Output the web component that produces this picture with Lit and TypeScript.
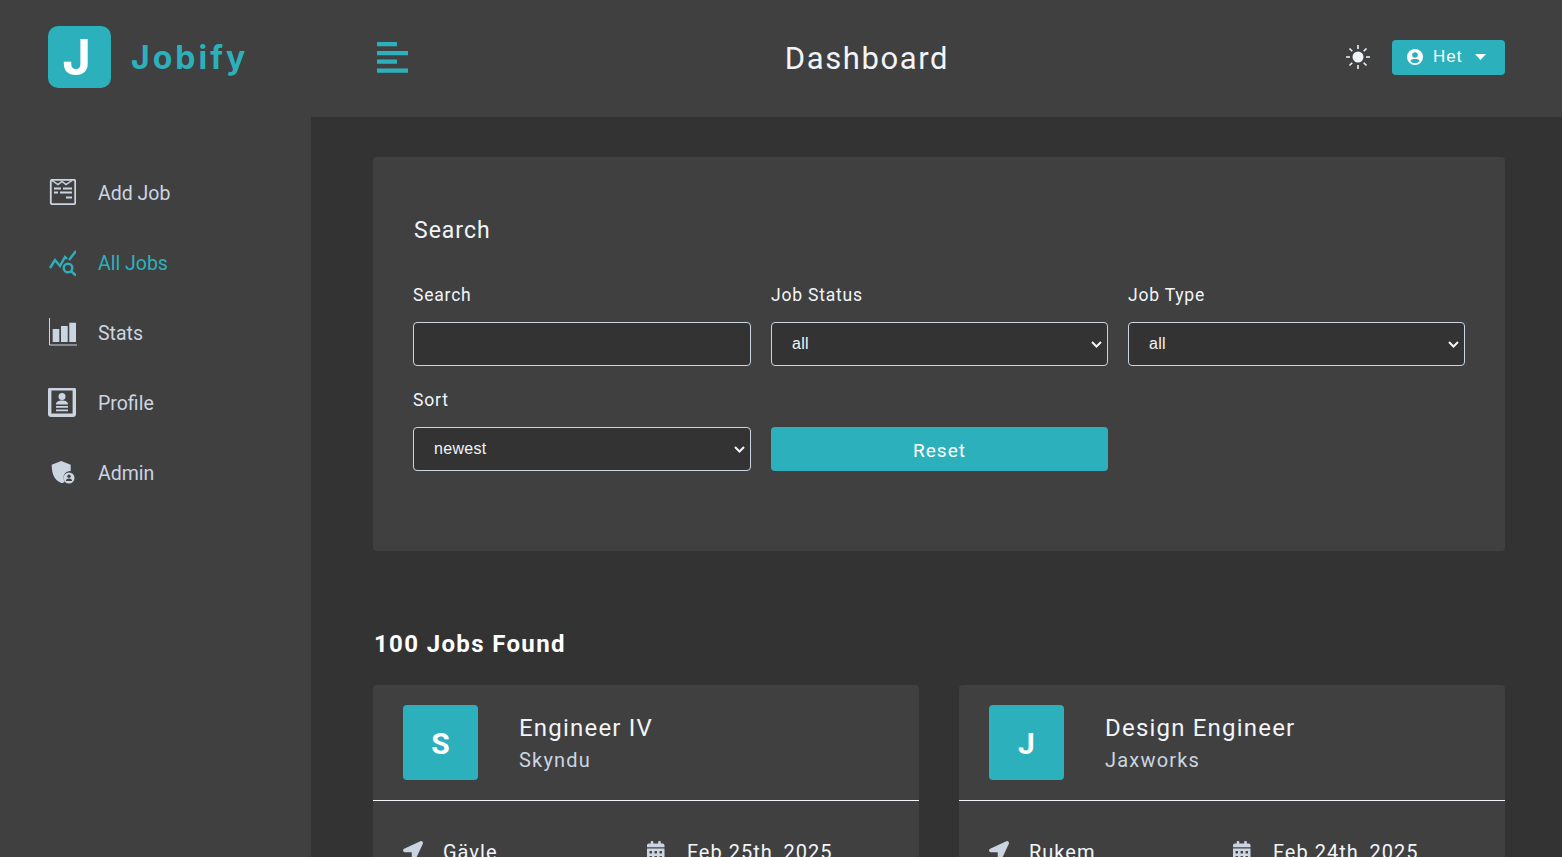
import { LitElement, html, css } from 'lit';
import { customElement } from 'lit/decorators.js';

const icons = {
    addJob: html`<svg viewBox="0 0 28 28"><rect x="2.800" y=".8" width="24.400" height="24.400" rx="1.500" fill="none" stroke="currentColor" stroke-width="1.800"/><path fill="none" stroke="currentColor" stroke-width="1.500" d="M4 1.500l6 4 4-3 4 3 6-4"/><path fill="currentColor" d="M6 8.500h7v2H6zM15 8.500h9v2h-9zM6 12.500h4v2H6zM12 12.500h12v2H12zM18 17.500h6v2h-6z"/></svg>`,
    allJobs: html`<svg viewBox="0 0 28 28"><path fill="none" stroke="currentColor" stroke-width="2.400" d="M2 19l5-8 5 6 5-9 2 2M21 11l7-9"/><circle cx="20" cy="19" r="4.300" fill="none" stroke="currentColor" stroke-width="2.400"/><path stroke="currentColor" stroke-width="2.400" d="M23.500 22.500l4.500 4"/></svg>`,
    stats: html`<svg viewBox="0 0 28 28" class="overflow"><path fill="none" stroke="currentColor" stroke-width="1" d="M1.500-1v27H29"/><path fill="currentColor" d="M4.700 10h6.600v13H4.700zM13 7h6.700v16H13zM21.300 3.700H28V23h-6.700z"/></svg>`,
    profile: html`<svg viewBox="0 1 28 30"><rect x="1.700" y="1.700" width="24.600" height="26.600" rx="1.500" fill="none" stroke="currentColor" stroke-width="3.400"/><circle cx="14" cy="9.500" r="3.500" fill="currentColor"/><path fill="currentColor" d="M8 17.500c0-3 2.500-4 6-4s6 1 6 4zM8 19h12v1.700H8zM8 22.500h12v1.700H8z"/></svg>`,
    admin: html`<svg viewBox="0 0 28 28"><path fill="currentColor" d="M13.200 2l9.500 3.800V12c-6 0-9 5-6 11-1 .7-2.500 1-3.500 1C7 21.500 3.700 16 3.700 5.800z"/><circle cx="21" cy="19" r="5.500" fill="currentColor"/><circle cx="21" cy="17.300" r="1.700" fill="#404040"/><path fill="#404040" d="M17.900 22c.3-1.800 1.400-2.500 3.100-2.500s2.800.7 3.100 2.500z"/></svg>`,
    toggle: html`<svg viewBox="0 0 31 31"><path fill="currentColor" d="M0 0h20v4.300H0zM0 9h31v4.300H0zM0 17.500h20v4.300H0zM0 26.500h31v4.300H0z"/></svg>`,
    sun: html`<svg viewBox="0 0 24 24"><circle cx="12" cy="12" r="5.500" fill="currentColor"/><path stroke="currentColor" stroke-width="1.600" d="M12 0v4M12 20v4M0 12h4M20 12h4M3.500 3.500l2.800 2.800M17.700 17.700l2.800 2.800M3.500 20.500l2.800-2.800M17.700 6.300l2.800-2.800"/></svg>`,
    user: html`<svg viewBox="0 0 16 16"><path fill="currentColor" fill-rule="evenodd" d="M8 0a8 8 0 1 0 0 16A8 8 0 0 0 8 0zm0 3.200a2.800 2.800 0 1 1 0 5.600 2.800 2.800 0 0 1 0-5.600zm0 11a6.200 6.200 0 0 1-4.700-2.200C3.900 10.800 5 10 6.200 10h3.600c1.200 0 2.300.8 2.900 2A6.200 6.200 0 0 1 8 14.200z"/></svg>`,
    caret: html`<svg viewBox="0 0 11 6"><path fill="currentColor" d="M0 0h11L5.500 6z"/></svg>`,
    arrow: html`<svg viewBox="0 0 512 512"><path fill="currentColor" d="M444.520 3.520L28.740 195.420c-47.970 22.390-31.980 92.750 19.190 92.750h175.910v175.910c0 51.170 70.360 67.170 92.750 19.190l191.900-415.780c15.990-38.390-25.590-79.970-63.970-63.970z"/></svg>`,
    calendar: html`<svg viewBox="0 0 448 512"><path fill="currentColor" d="M0 464c0 26.500 21.500 48 48 48h352c26.500 0 48-21.500 48-48V192H0v272zm320-196c0-6.600 5.400-12 12-12h40c6.600 0 12 5.400 12 12v40c0 6.600-5.400 12-12 12h-40c-6.600 0-12-5.400-12-12v-40zm0 128c0-6.600 5.400-12 12-12h40c6.600 0 12 5.400 12 12v40c0 6.600-5.400 12-12 12h-40c-6.600 0-12-5.400-12-12v-40zM192 268c0-6.600 5.400-12 12-12h40c6.600 0 12 5.400 12 12v40c0 6.600-5.400 12-12 12h-40c-6.600 0-12-5.400-12-12v-40zm0 128c0-6.600 5.400-12 12-12h40c6.600 0 12 5.400 12 12v40c0 6.600-5.400 12-12 12h-40c-6.600 0-12-5.400-12-12v-40zM64 268c0-6.600 5.400-12 12-12h40c6.600 0 12 5.400 12 12v40c0 6.600-5.400 12-12 12H76c-6.600 0-12-5.400-12-12v-40zm0 128c0-6.600 5.400-12 12-12h40c6.600 0 12 5.400 12 12v40c0 6.600-5.400 12-12 12H76c-6.600 0-12-5.400-12-12v-40zM400 64h-48V16c0-8.800-7.200-16-16-16h-32c-8.800 0-16 7.200-16 16v48H160V16c0-8.800-7.200-16-16-16h-32c-8.800 0-16 7.200-16 16v48H48C21.500 64 0 85.500 0 112v48h448v-48c0-26.500-21.500-48-48-48z"/></svg>`,
};

const navItems = [
    { label: 'Add Job', icon: icons.addJob, active: false },
    { label: 'All Jobs', icon: icons.allJobs, active: true },
    { label: 'Stats', icon: icons.stats, active: false },
    { label: 'Profile', icon: icons.profile, active: false },
    { label: 'Admin', icon: icons.admin, active: false },
];

const jobs = [
    { letter: 'S', title: 'Engineer IV', company: 'Skyndu', location: 'Gävle', date: 'Feb 25th, 2025' },
    { letter: 'J', title: 'Design Engineer', company: 'Jaxworks', location: 'Rukem', date: 'Feb 24th, 2025' },
];

@customElement('app-root')
export class AppRoot extends LitElement {
    static styles = css`
        :host {
            display: flex;
            height: 100vh;
            overflow: hidden;
            background: #333333;
            color: #f1f5f9;
            font-family: Roboto, 'Open Sans', sans-serif;
            letter-spacing: 1px;
        }

        svg {
            display: block;
        }

        svg.overflow {
            overflow: visible;
        }

        .sidebar {
            flex: 0 0 311px;
            background: #404040;
        }

        .logo {
            display: flex;
            align-items: center;
            gap: 20px;
            height: 117px;
            padding: 0 0 3px 48px;
            box-sizing: border-box;
        }

        .logo-mark {
            width: 63px;
            height: 62px;
            box-sizing: border-box;
            padding-right: 6px;
            border-radius: 10px;
            background: #2cb1bc;
            color: #fff;
            display: flex;
            align-items: center;
            justify-content: center;
            font: 700 49px/1 Inter, sans-serif;
            letter-spacing: 0;
        }

        .logo-text {
            margin-top: 2px;
            color: #2cb1bc;
            font: 700 32px/1 Inter, sans-serif;
            letter-spacing: 3px;
        }

        nav {
            display: flex;
            flex-direction: column;
            padding-top: 41px;
        }

        .nav-item {
            display: flex;
            align-items: center;
            height: 70px;
            padding-left: 48px;
            color: #cbd5e1;
            font-size: 19.500px;
            letter-spacing: 0;
        }

        .nav-item.active {
            color: #2cb1bc;
        }

        .nav-icon {
            width: 28px;
            height: 30px;
            margin-right: 22px;
            display: flex;
            align-items: center;
        }

        .nav-icon svg {
            width: 28px;
        }

        .content {
            flex: 1;
            min-width: 0;
        }

        header {
            height: 117px;
            background: #404040;
            display: flex;
            align-items: center;
            justify-content: space-between;
            padding: 0 57px 3px 66px;
            box-sizing: border-box;
        }

        .toggle {
            width: 31px;
            color: #2cb1bc;
        }

        h1 {
            margin: 2px 0 0 -20px;
            font-size: 31px;
            font-weight: 400;
            line-height: 1;
            color: #f1f5f9;
            letter-spacing: 1.600px;
        }

        .actions {
            display: flex;
            align-items: center;
            gap: 22px;
        }

        .sun {
            width: 24px;
            color: #f1f5f9;
        }

        .user-btn {
            display: flex;
            align-items: center;
            width: 113px;
            height: 35px;
            box-sizing: border-box;
            padding: 0 0 2px 15px;
            background: #2cb1bc;
            border-radius: 4px;
            color: #fff;
            font: 400 17px/1 'Liberation Sans', sans-serif;
            letter-spacing: 1px;
        }

        .user-btn .user-icon {
            width: 16px;
            margin: 2px 10px 0 0;
        }

        .user-btn .caret {
            width: 11px;
            margin: 2px 0 0 13px;
        }

        main {
            padding: 40px 57px 0 62px;
        }

        .search-card {
            height: 394px;
            box-sizing: border-box;
            background: #404040;
            border-radius: 4px;
            padding: 58px 40px 0;
        }

        .search-card h2 {
            margin: 0 0 34px 1px;
            font-size: 23px;
            font-weight: 400;
            line-height: 32px;
        }

        .form {
            display: grid;
            grid-template-columns: 338px 337px 337px;
            column-gap: 20px;
            row-gap: 20px;
        }

        label {
            display: block;
            margin-bottom: 13px;
            font-size: 17.500px;
            line-height: 28px;
            letter-spacing: 0.800px;
        }

        .control {
            display: block;
            width: 100%;
            height: 44px;
            box-sizing: border-box;
            background: #333333;
            border: 1px solid #cbd5e1;
            border-radius: 4px;
            color: #f1f5f9;
            padding: 0 16px;
            font: 400 16px 'Liberation Sans', sans-serif;
            letter-spacing: 0.3px;
        }

        select.control {
            appearance: none;
            padding: 0 20px 2px 20px;
            background-image: url("data:image/svg+xml,%3Csvg xmlns='http://www.w3.org/2000/svg' width='11' height='7' viewBox='0 0 11 7' fill='none' stroke='%23f1f5f9' stroke-width='2'%3E%3Cpolyline points='1 1 5.500 5.500 10 1'/%3E%3C/svg%3E");
            background-repeat: no-repeat;
            background-position: right 5px center;
        }

        .reset {
            align-self: end;
            height: 44px;
            border: 0;
            border-radius: 4px;
            background: #2cb1bc;
            color: #fff;
            font-family: inherit;
            font-size: 19px;
            letter-spacing: 1px;
            padding: 2px 0 0;
        }

        .found {
            margin: 76px 0 24px 1px;
            font-size: 24px;
            font-weight: 700;
            line-height: 34px;
            letter-spacing: 1.350px;
            color: #fff;
        }

        .jobs {
            display: grid;
            grid-template-columns: 1fr 1fr;
            gap: 40px;
        }

        .job {
            background: #404040;
            border-radius: 4px 4px 0 0;
        }

        .job-head {
            display: flex;
            align-items: center;
            gap: 41px;
            padding: 20px 30px;
            border-bottom: 1px solid #f1f5f9;
        }

        .avatar {
            flex: none;
            width: 75px;
            height: 75px;
            box-sizing: border-box;
            padding-top: 2px;
            border-radius: 4px;
            background: #2cb1bc;
            color: #fff;
            display: flex;
            align-items: center;
            justify-content: center;
            font-size: 30px;
            font-weight: 700;
            letter-spacing: 0;
        }

        .job-title {
            font-size: 24px;
            line-height: 32px;
            letter-spacing: 1.200px;
        }

        .job-company {
            margin-top: 2px;
            color: #cbd5e1;
            font-size: 20px;
            line-height: 28px;
            letter-spacing: 1.200px;
        }

        .job-meta {
            display: grid;
            grid-template-columns: 244px 1fr;
            padding: 37px 30px 0;
        }

        .meta-item {
            display: flex;
            align-items: center;
            font-size: 20px;
            line-height: 28px;
        }

        .meta-icon {
            flex: none;
            width: 20px;
            margin: -2px 20px 0 0;
            color: #cbd5e1;
            display: flex;
        }

        .meta-icon svg {
            height: 20px;
        }
    `;

    render() {
        return html`
            <aside class="sidebar">
                <div class="logo">
                    <div class="logo-mark">J</div>
                    <div class="logo-text">Jobify</div>
                </div>
                <nav>
                    ${navItems.map(item => html`
                        <div class="nav-item ${item.active ? 'active' : ''}">
                            <span class="nav-icon">${item.icon}</span>${item.label}
                        </div>
                    `)}
                </nav>
            </aside>
            <div class="content">
                <header>
                    <div class="toggle">${icons.toggle}</div>
                    <h1>Dashboard</h1>
                    <div class="actions">
                        <div class="sun">${icons.sun}</div>
                        <div class="user-btn">
                            <span class="user-icon">${icons.user}</span>Het<span class="caret">${icons.caret}</span>
                        </div>
                    </div>
                </header>
                <main>
                    <section class="search-card">
                        <h2>Search</h2>
                        <div class="form">
                            <div>
                                <label>Search</label>
                                <input class="control" type="text" />
                            </div>
                            <div>
                                <label>Job Status</label>
                                <select class="control"><option>all</option></select>
                            </div>
                            <div>
                                <label>Job Type</label>
                                <select class="control"><option>all</option></select>
                            </div>
                            <div>
                                <label>Sort</label>
                                <select class="control"><option>newest</option></select>
                            </div>
                            <button class="reset">Reset</button>
                        </div>
                    </section>
                    <div class="found">100 Jobs Found</div>
                    <div class="jobs">
                        ${jobs.map(job => html`
                            <article class="job">
                                <div class="job-head">
                                    <div class="avatar">${job.letter}</div>
                                    <div>
                                        <div class="job-title">${job.title}</div>
                                        <div class="job-company">${job.company}</div>
                                    </div>
                                </div>
                                <div class="job-meta">
                                    <div class="meta-item"><span class="meta-icon">${icons.arrow}</span>${job.location}</div>
                                    <div class="meta-item"><span class="meta-icon">${icons.calendar}</span>${job.date}</div>
                                </div>
                            </article>
                        `)}
                    </div>
                </main>
            </div>
        `;
    }
}
